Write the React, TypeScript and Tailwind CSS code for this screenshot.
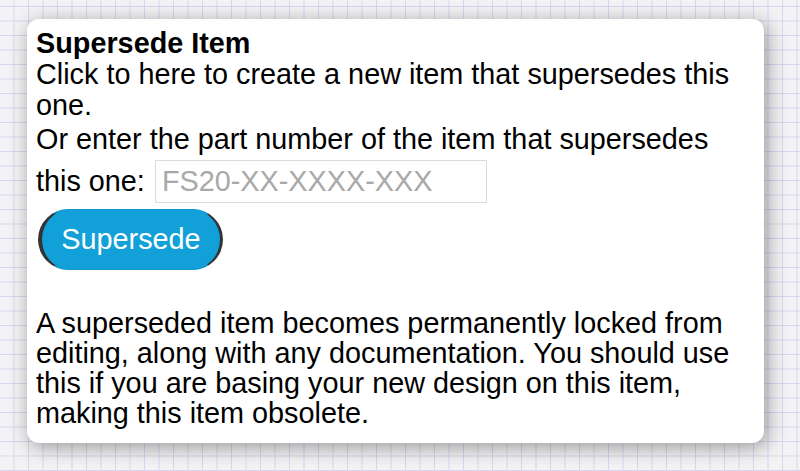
export default function App() {
  return (
    <div
      className="min-h-[471px] w-full bg-[#f3f3f5] bg-[linear-gradient(to_right,#d6d6ee_1px,transparent_1px),linear-gradient(to_bottom,#d6d6ee_1px,transparent_1px)] bg-[size:14.5px_14.5px] bg-[position:-1px_6px] pt-[19px] pl-[27px] pb-[28px]"
      style={{ fontFamily: '"Liberation Sans", Arial, Helvetica, sans-serif' }}
    >
      {/* Supersede card */}
      <div className="w-[737px] rounded-[12px] bg-white px-[9px] pt-[9px] pb-[15px] text-[28.8px] leading-[31px] text-black shadow-[3px_4px_20px_rgba(0,0,0,0.38)]">
        <div className="font-bold">Supersede Item</div>
        <div>Click to here to create a new item that supersedes this one.</div>
        <div className="mt-[3px]">
          Or enter the part number of the item that supersedes this one:{" "}
          <input
            type="text"
            placeholder="FS20-XX-XXXX-XXX"
            className="mt-[5px] mb-[6px] ml-[2px] h-[43px] w-[332px] border border-[#dcdcdc] bg-white px-[6px] text-[28.8px] leading-normal text-black outline-none placeholder:text-[#a9a9a9]"
          />
        </div>
        <button className="ml-[2px] h-[61px] w-[185px] rounded-full border-l-4 border-r-[3px] border-y border-[#333] border-y-[#1596cc] bg-[#12a0d8] text-[28.8px] leading-none text-white">
          Supersede
        </button>
        <div className="mt-[38px] leading-[30px]">
          A superseded item becomes permanently locked from editing, along with any documentation. You should use
          this if you are basing your new design on this item, making this item obsolete.
        </div>
      </div>
    </div>
  )
}
